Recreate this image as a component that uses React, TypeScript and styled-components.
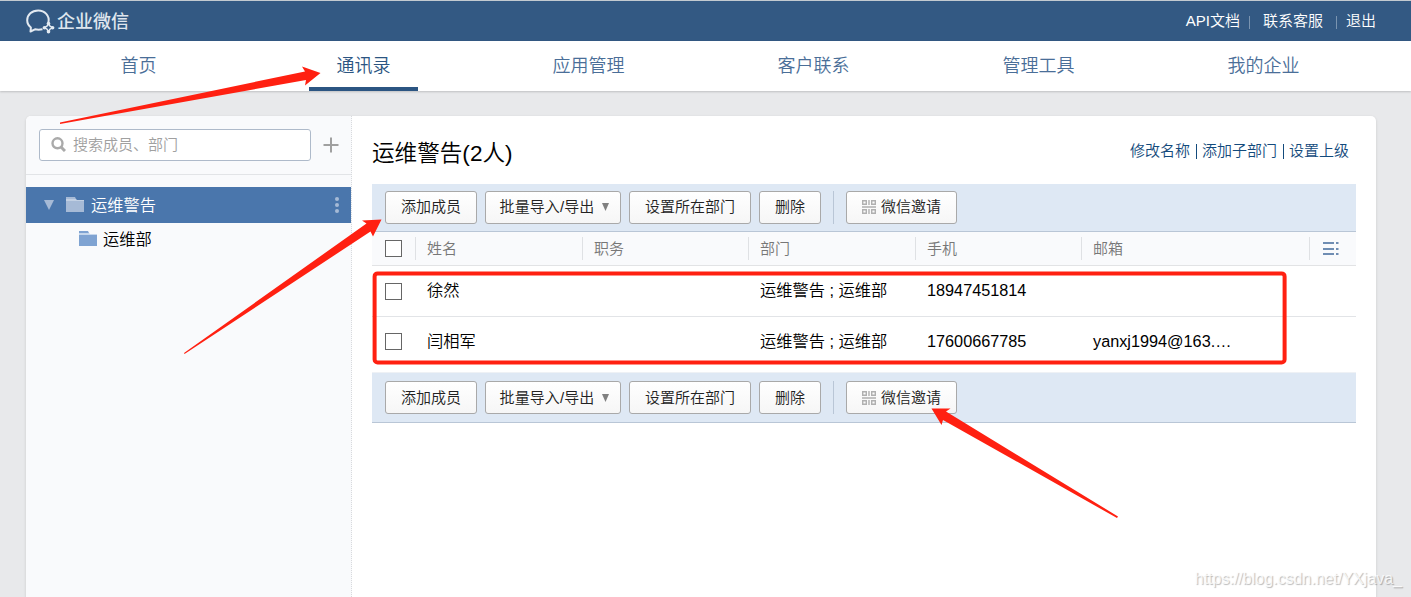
import React from "react";
import styled, { createGlobalStyle } from "styled-components";

const GlobalStyle = createGlobalStyle`
  * { box-sizing: border-box; }
  html, body { margin: 0; padding: 0; }
  body {
    background: #e8e9eb;
    font-family: "Liberation Sans", "Noto Sans CJK SC", sans-serif;
    font-size: 15px;
    font-weight: 350;
    color: #000;
    overflow: hidden;
  }
`;

const Page = styled.div`
  position: relative;
  width: 1411px;
  height: 597px;
  overflow: hidden;
  display: flex;
  flex-direction: column;
`;

const TopBar = styled.header`
  flex: none;
  height: 41px;
  padding: 0 35px 0 26px;
  border-top: 1px solid #c3cad0;
  background: #335983;
  display: flex;
  justify-content: space-between;
  align-items: center;
  color: #fff;
`;

const Brand = styled.div`
  display: flex;
  align-items: center;
  gap: 2px;
  padding-top: 1px;
  font-size: 18px;
  font-weight: 500;
  line-height: 24px;
  color: #dfe6ee;
`;

const TopLinks = styled.nav`
  display: flex;
  align-items: center;
  line-height: 20px;
`;

const TopDivider = styled.i<{ $left: number; $right: number }>`
  width: 1px;
  height: 13px;
  margin: 2px ${(p) => p.$right}px 0 ${(p) => p.$left}px;
  background: #7a94b0;
`;

const NavBar = styled.nav`
  flex: none;
  height: 50px;
  padding: 0 35px 0 26px;
  background: #fff;
  display: grid;
  grid-template-columns: repeat(6, 225px);
  justify-items: center;
  box-shadow: 0 1px 2px rgba(0, 0, 0, 0.18);
`;

const NavItem = styled.a<{ $active?: boolean }>`
  width: 109px;
  height: 50px;
  padding-top: 1px;
  border-bottom: 4px solid ${(p) => (p.$active ? "#2b5582" : "transparent")};
  color: ${(p) => (p.$active ? "#2b5582" : "#4a6e98")};
  font-size: 18px;
  line-height: 49px;
  text-align: center;
`;

const Card = styled.main`
  flex: 1;
  margin: 25px 35px 0 26px;
  background: #fff;
  border-radius: 5px 5px 0 0;
  box-shadow: 0 1px 3px rgba(0, 0, 0, 0.14);
  display: flex;
  overflow: hidden;
`;

const Sidebar = styled.aside`
  flex: none;
  width: 326px;
  background: #f9fafc;
  border-right: 1px dotted #d8dadd;
`;

const SearchRow = styled.div`
  height: 59px;
  padding: 13px 12px 0 13px;
  border-bottom: 1px solid #e2e4e7;
  display: flex;
  align-items: flex-start;
  gap: 12px;
`;

const SearchBox = styled.div`
  flex: none;
  width: 272px;
  height: 32px;
  padding: 0 0 1px 11px;
  border: 1px solid #aebaca;
  border-radius: 3px;
  background: #fff;
  display: flex;
  align-items: center;
  gap: 7px;
  color: #a0a0a0;
  line-height: 30px;
`;

const PlusIcon = styled.svg`
  flex: none;
  margin-top: 8px;
`;

const Tree = styled.div`
  padding-top: 12px;
`;

const TreeRow = styled.div<{ $selected?: boolean }>`
  height: ${(p) => (p.$selected ? 36 : 33)}px;
  padding: 0 10px ${(p) => (p.$selected ? 1 : 2)}px ${(p) => (p.$selected ? 18 : 53)}px;
  background: ${(p) => (p.$selected ? "#4a76ac" : "transparent")};
  color: ${(p) => (p.$selected ? "#fff" : "#000")};
  font-size: 16.25px;
  line-height: 32px;
  display: flex;
  align-items: center;
`;

const TreeLabel = styled.span<{ $gap: number }>`
  flex: 1;
  margin-left: ${(p) => p.$gap}px;
`;

const Folder = styled.svg<{ $gap: number }>`
  margin-left: ${(p) => p.$gap}px;
`;

const Content = styled.section`
  width: 1004px;
  padding-left: 20px;
`;

const TitleRow = styled.div`
  height: 68px;
  padding: 0 7px 0 0;
  display: flex;
  align-items: center;
  justify-content: space-between;
`;

const Title = styled.h1`
  margin: 7px 0 0;
  font-size: 22.6px;
  font-weight: 350;
  line-height: 32px;
`;

const TitleLinks = styled.div`
  display: flex;
  align-items: center;
  padding-top: 2px;
  color: #134a7c;
  line-height: 20px;
`;

const LinkDivider = styled.i`
  width: 1px;
  height: 15px;
  margin: 0 5px 0 6px;
  background: #134a7c;
`;

const Toolbar = styled.div<{ $height: number }>`
  height: ${(p) => p.$height}px;
  padding: ${(p) => (p.$height > 48 ? 8 : 7)}px 0 0 13px;
  background: #dee8f4;
  border-bottom: 1px solid #b9c6d6;
  display: flex;
  align-items: flex-start;
`;

const Button = styled.button<{ $width: number }>`
  width: ${(p) => p.$width}px;
  height: 33px;
  margin: 0 8px 0 0;
  padding: 0 0 1px;
  border: 1px solid #a9a9a9;
  border-radius: 3px;
  background: linear-gradient(#fff, #f6f6f6);
  color: #222;
  font: inherit;
  line-height: 28px;
  white-space: nowrap;
  display: flex;
  align-items: center;
  justify-content: center;

  ${Toolbar}:last-child > & {
    padding: 1px 0 0;
  }
`;

const MenuLabel = styled.span`
  margin-left: 4px;
  letter-spacing: 0.1px;
`;

const Caret = styled.svg`
  margin: 1px 0 0 7px;
`;

const QrIcon = styled.svg`
  margin: 0 5px 0 0;
`;

const ToolDivider = styled.i`
  width: 1px;
  height: 33px;
  margin: 0 12px 0 4px;
  background: #b9c6d6;
`;

const columns = "43px 167px 166px 167px 166px 228px 47px";

const HeadRow = styled.div`
  height: 34px;
  background: #f9fafc;
  border-bottom: 1px solid #e2e3e5;
  display: grid;
  grid-template-columns: ${columns};
  align-items: center;
`;

const HeadCell = styled.div`
  height: 23px;
  padding-left: 11px;
  border-left: 1px solid #dfe1e4;
  color: #777;
  line-height: 22px;
  display: flex;
  align-items: center;
`;

const BodyRow = styled.div<{ $last?: boolean }>`
  height: ${(p) => (p.$last ? 56 : 51)}px;
  padding-bottom: ${(p) => (p.$last ? 6 : 0)}px;
  border-bottom: 1px solid ${(p) => (p.$last ? "#eef1f5" : "#e2e4e7")};
  font-size: 16.25px;
  line-height: 24px;
  display: grid;
  grid-template-columns: ${columns};
  align-items: center;
`;

const BodyCell = styled.div<{ $lift: number }>`
  padding: 0 0 ${(p) => p.$lift}px 12px;
  white-space: nowrap;
`;

const Checkbox = styled.span`
  display: block;
  width: 17px;
  height: 17px;
  margin-left: 13px;
  border: 1px solid #666;
  background: #fff;
`;

const Annotations = styled.svg`
  position: absolute;
  left: 0;
  top: 0;
  pointer-events: none;
`;

const Watermark = styled.div`
  position: absolute;
  right: 9px;
  bottom: 8px;
  font-size: 16px;
  line-height: 20px;
  color: rgba(255, 255, 255, 0.8);
  text-shadow: 1px 1px 1px rgba(0, 0, 0, 0.28);
`;

const Logo = () => (
  <svg width="29" height="26" viewBox="0 0 29 26" fill="none" stroke="#e3eaf1" strokeLinejoin="round">
    <path d="M22.4 13.5 C24 6.5 18.5 1.5 12.2 1.5 C5.8 1.5 1.2 5.800 1.2 11.3 C1.2 14.3 2.6 16.7 4.9 18.5 L4.5 22.5 L9 20.3 Q12.5 21 16.5 20.3" strokeWidth="2" />
    <path d="M22.5 14.500 L24 17.200 L26.700 18.7 L24 20.200 L22.5 22.900 L21 20.200 L18.300 18.7 L21 17.200 Z" strokeWidth="1.5" />
    <g fill="#e3eaf1" stroke="none">
      <circle cx="22.5" cy="14.6" r="1.8" />
      <circle cx="26.6" cy="18.7" r="1.8" />
      <circle cx="22.5" cy="22.8" r="1.8" />
      <circle cx="18.4" cy="18.7" r="1.8" />
    </g>
  </svg>
);

const FolderIcon = ({ color, light, gap }: { color: string; light: string; gap: number }) => (
  <Folder $gap={gap} width="18" height="15" viewBox="0 0 18 15">
    <path d="M0 0H9L10 2H0Z" fill={color} />
    <path d="M0 2H10L11 3H18V4H0Z" fill={light} />
    <path d="M0 4H18V15H0Z" fill={color} />
  </Folder>
);

const Qr = () => (
  <QrIcon width="14" height="14" viewBox="0 0 14 14" fill="none" stroke="#b0b0b0">
    <path d="M.7 .7h3.6v3.6h-3.6zM9.7 .7h3.6v3.6h-3.6zM.7 9.7h3.6v3.6h-3.6zM9.7 9.7h3.6v3.6h-3.6zM7 0v5M7 9v5M0 7h14" strokeWidth="1.4" />
  </QrIcon>
);

const Actions = ({ height }: { height: number }) => (
  <Toolbar $height={height}>
    <Button $width={92}>添加成员</Button>
    <Button $width={136}>
      <MenuLabel>批量导入/导出</MenuLabel>
      <Caret width="9" height="9" viewBox="0 0 9 9">
        <path d="M1 0H8L4.5 8Z" fill="#808080" />
      </Caret>
    </Button>
    <Button $width={122}>设置所在部门</Button>
    <Button $width={62}>删除</Button>
    <ToolDivider />
    <Button $width={111}>
      <Qr />
      微信邀请
    </Button>
  </Toolbar>
);

const navItems = ["首页", "通讯录", "应用管理", "客户联系", "管理工具", "我的企业"];
const headings = ["姓名", "职务", "部门", "手机", "邮箱"];
const members = [
  ["徐然", "", "运维警告 ; 运维部", "18947451814", ""],
  ["闫相军", "", "运维警告 ; 运维部", "17600667785", "yanxj1994@163.…"],
];

export default function App() {
  return (
    <Page>
      <GlobalStyle />
      <TopBar>
        <Brand>
          <Logo />
          企业微信
        </Brand>
        <TopLinks>
          <span>API文档</span>
          <TopDivider $left={9} $right={13} />
          <span>联系客服</span>
          <TopDivider $left={13} $right={9} />
          <span>退出</span>
        </TopLinks>
      </TopBar>
      <NavBar>
        {navItems.map((item) => (
          <NavItem key={item} $active={item === "通讯录"}>
            {item}
          </NavItem>
        ))}
      </NavBar>
      <Card>
        <Sidebar>
          <SearchRow>
            <SearchBox>
              <svg width="15" height="15" viewBox="0 0 15 15" fill="none" stroke="#aaa">
                <circle cx="6.5" cy="6.3" r="5" strokeWidth="2.4" />
                <path d="M10 10L14 14" strokeWidth="3" />
              </svg>
              搜索成员、部门
            </SearchBox>
            <PlusIcon width="16" height="16" viewBox="0 0 16 16">
              <path d="M8 0.5V15.5M0.5 8H15.5" stroke="#a0a0a0" strokeWidth="2" />
            </PlusIcon>
          </SearchRow>
          <Tree>
            <TreeRow $selected>
              <svg width="10" height="10" viewBox="0 0 10 10">
                <path d="M0 0H10L5 10Z" fill="#a6bad6" />
              </svg>
              <FolderIcon color="#a6bad6" light="#c2d0e3" gap={12} />
              <TreeLabel $gap={7}>运维警告</TreeLabel>
              <svg width="8" height="16" viewBox="0 0 8 16" fill="#a6bad6">
                <circle cx="4" cy="2" r="2" />
                <circle cx="4" cy="8" r="2" />
                <circle cx="4" cy="14" r="2" />
              </svg>
            </TreeRow>
            <TreeRow>
              <FolderIcon color="#7fa3d2" light="#c6d7ec" gap={0} />
              <TreeLabel $gap={6}>运维部</TreeLabel>
            </TreeRow>
          </Tree>
        </Sidebar>
        <Content>
          <TitleRow>
            <Title>运维警告(2人)</Title>
            <TitleLinks>
              <span>修改名称</span>
              <LinkDivider />
              <span>添加子部门</span>
              <LinkDivider />
              <span>设置上级</span>
            </TitleLinks>
          </TitleRow>
          <Actions height={48} />
          <HeadRow>
            <Checkbox />
            {headings.map((heading) => (
              <HeadCell key={heading}>{heading}</HeadCell>
            ))}
            <HeadCell>
              <svg width="18" height="13" viewBox="0 0 18 13" stroke="#6f8db3" strokeWidth="2">
                <path d="M2 1H13M2 7H13M2 12H13M15 1H17.5M15 7H17.5M15 12H17.5" />
              </svg>
            </HeadCell>
          </HeadRow>
          {members.map((member, row) => (
            <BodyRow key={member[0]} $last={row === members.length - 1}>
              <Checkbox />
              {member.map((value, cell) => (
                <BodyCell key={cell} $lift={row === 0 ? 2 : 1}>
                  {value}
                </BodyCell>
              ))}
            </BodyRow>
          ))}
          <Actions height={50} />
        </Content>
      </Card>
      <Annotations width="1411" height="597" viewBox="0 0 1411 597" fill="#ff2011">
        <rect x="374.6" y="273.4" width="910" height="89" rx="3" fill="none" stroke="#ff2011" strokeWidth="4" />
        <path d="M60 122.5L305 71.5L302 66.5L320.5 73L305 85.5L306 80L60 124Z" />
        <path d="M184 353L366.5 223.5L362 220.5L381.5 219.5L373 236.5L370.5 231.5L184.5 354Z" />
        <path d="M931.5 408.5L950.5 408.5L946 411.5L1118 516.5L1117 518L943 420L941.5 425Z" />
      </Annotations>
      <Watermark>https://blog.csdn.net/YXjava_</Watermark>
    </Page>
  );
}
